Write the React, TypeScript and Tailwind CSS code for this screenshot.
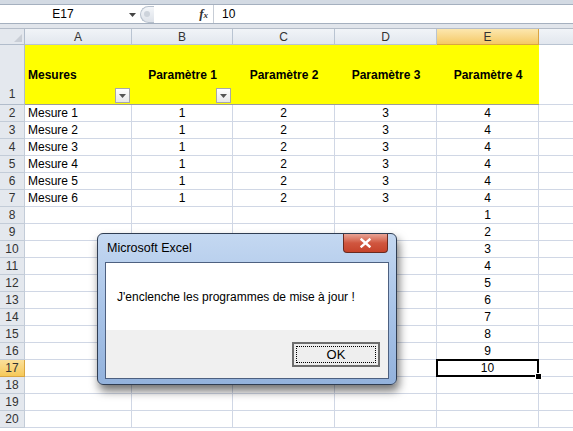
import React from 'react';

const COLS = [
  { key: 'A', w: 'w-[107px]' },
  { key: 'B', w: 'w-[101px]' },
  { key: 'C', w: 'w-[102px]' },
  { key: 'D', w: 'w-[102px]' },
  { key: 'E', w: 'w-[102px]' },
  { key: 'F', w: 'w-[40px]' },
];

const HEADERS = ['Mesures', 'Paramètre 1', 'Paramètre 2', 'Paramètre 3', 'Paramètre 4'];

function cellValues(row: number): string[] {
  if (row >= 2 && row <= 7) return [`Mesure ${row - 1}`, '1', '2', '3', '4', ''];
  if (row >= 8 && row <= 17) return ['', '', '', '', String(row - 7), ''];
  return ['', '', '', '', '', ''];
}

function FilterButton() {
  return (
    <div className="absolute right-[2px] bottom-[1px] w-[15px] h-[15px] border border-[#a8a8a8] bg-gradient-to-b from-white to-[#e8e8e8] flex items-center justify-center">
      <svg width="7" height="4" viewBox="0 0 7 4">
        <path d="M0 0h7L3.5 4z" fill="#555" />
      </svg>
    </div>
  );
}

function FormulaBar() {
  return (
    <div className="flex flex-col">
      <div className="h-[5px] bg-[#d3dae3] border-b border-[#a5b0bf]" />
      <div className="h-[19px] flex bg-white border-b border-[#a5b0bf]">
        <div className="w-[140px] flex items-center relative">
          <span className="w-full text-center pr-[14px] text-[12px] text-black">E17</span>
          <svg className="absolute right-[4px] top-[8px]" width="7" height="4" viewBox="0 0 7 4">
            <path d="M0 0h7L3.5 4z" fill="#444" />
          </svg>
        </div>
        <div className="w-[18px] flex items-center">
          <div className="w-[14px] h-[17px] rounded-l-full border border-r-0 border-[#b7c0cc] bg-gradient-to-b from-[#f4f6f9] to-[#dde2e9] flex items-center pl-[3px]">
            <div className="w-[6px] h-[6px] rounded-full bg-[#cdd3db]" />
          </div>
        </div>
        <div className="w-[56px] flex items-center justify-end pr-[5px] border-r border-[#c7cdd6]">
          <span className="font-['Liberation_Serif'] italic font-bold text-[13px] text-[#333]">f<span className="text-[9px]">x</span></span>
        </div>
        <div className="flex items-center pl-[8px] text-[12px] text-black">10</div>
      </div>
      <div className="h-[5px] bg-[#e1e5eb] border-b border-[#b4bcc8]" />
    </div>
  );
}

function Dialog() {
  return (
    <div className="absolute left-[97px] top-[233px] w-[300px] h-[152px] rounded-[6px] border border-[#2f3d52] bg-gradient-to-b from-[#c4d8f1] via-[#a9c4e8] to-[#93b2dc] shadow-[2px_6px_10px_rgba(0,0,0,0.55)] flex flex-col px-[7px] pb-[5px]">
      <div className="h-[28px] flex items-center relative">
        <span className="pl-[2px] text-[12.5px] text-black">Microsoft Excel</span>
        <div className="absolute right-[1px] top-0 w-[45px] h-[19px] rounded-b-[4px] border border-t-0 border-[#6a2a20] bg-gradient-to-b from-[#e7a395] via-[#d0563f] to-[#c6432b] flex items-center justify-center">
          <svg width="11" height="10" viewBox="0 0 11 10">
            <path d="M1.5 1.5l8 7M9.5 1.5l-8 7" stroke="white" strokeWidth="2.4" strokeLinecap="square" />
          </svg>
        </div>
      </div>
      <div className="flex-1 flex flex-col border border-[#4d6080] bg-white">
        <div className="h-[67px] flex items-center pl-[11px] text-[12px] text-black">
          J'enclenche les programmes de mise à jour !
        </div>
        <div className="flex-1 bg-[#f0f0f0] flex justify-end items-start pt-[12px] pr-[8px]">
          <div className="w-[88px] h-[25px] border-2 border-[#6e6e6e] bg-[#eeeeee] p-[2px]">
            <div className="w-full h-full border border-dotted border-black flex items-center justify-center text-[13px] text-black">
              OK
            </div>
          </div>
        </div>
      </div>
    </div>
  );
}

export default function App() {
  const rows = Array.from({ length: 19 }, (_, i) => i + 2);

  return (
    <div className="w-[573px] h-[431px] overflow-hidden relative bg-white font-['Liberation_Sans',sans-serif]">
      <FormulaBar />

      {/* column headers */}
      <div className="flex h-[16px]">
        <div className="w-[25px] shrink-0 bg-[#e4e8ee] border-r border-b border-[#b1bccb] relative">
          <svg className="absolute right-[2px] bottom-[2px]" width="8" height="8" viewBox="0 0 8 8">
            <path d="M8 0v8H0z" fill="#c9ced6" />
          </svg>
        </div>
        {COLS.map(c => (
          <div
            key={c.key}
            className={`${c.w} shrink-0 flex items-center justify-center text-[12px] border-r border-b ${
              c.key === 'E'
                ? 'bg-gradient-to-b from-[#fce7ae] to-[#f5c963] border-[#d9a641] text-[#333]'
                : 'bg-gradient-to-b from-[#f1f4f8] to-[#e2e7ee] border-[#b9c4d2] text-[#333]'
            }`}
          >
            {c.key === 'F' ? '' : c.key}
          </div>
        ))}
      </div>

      {/* row 1 */}
      <div className="flex h-[60px]">
        <div className="w-[25px] shrink-0 bg-[#e4e8ee] border-r border-b border-[#b1bccb] flex items-end justify-center pb-[1px] text-[12px] text-[#333]">
          1
        </div>
        {COLS.map((c, i) => (
          <div
            key={c.key}
            className={`${c.w} shrink-0 relative flex items-center text-[12px] font-bold text-black ${
              i < 5 ? 'bg-[#ffff00] border-b border-[#9c9c9c]' : 'bg-white border-r border-b border-[#d0d7e5]'
            } ${i === 0 ? 'pl-[3px]' : 'justify-center'}`}
          >
            {i < 5 ? HEADERS[i] : ''}
            {(i === 0 || i === 1) && <FilterButton />}
          </div>
        ))}
      </div>

      {/* data rows */}
      {rows.map(r => {
        const vals = cellValues(r);
        const sel = r === 17;
        return (
          <div key={r} className="flex h-[17px]">
            <div
              className={`w-[25px] shrink-0 border-r border-b flex items-center justify-center text-[12px] text-[#333] ${
                sel ? 'bg-gradient-to-b from-[#fbe09a] to-[#f6c957] border-[#d9a641]' : 'bg-[#e4e8ee] border-[#c3ccd8]'
              }`}
            >
              {r}
            </div>
            {COLS.map((c, i) => (
              <div
                key={c.key}
                className={`${c.w} shrink-0 relative border-r border-b border-[#d0d7e5] flex items-center text-[12px] text-black ${
                  i === 0 ? 'pl-[3px]' : 'justify-center'
                }`}
              >
                {vals[i]}
                {sel && i === 4 && (
                  <>
                    <div className="absolute z-10 -left-[1px] -top-[1px] -right-[1px] -bottom-[1px] border-2 border-black" />
                    <div className="absolute z-10 -right-[4px] -bottom-[4px] w-[7px] h-[7px] bg-black border border-white" />
                  </>
                )}
              </div>
            ))}
          </div>
        );
      })}

      <Dialog />
    </div>
  );
}
